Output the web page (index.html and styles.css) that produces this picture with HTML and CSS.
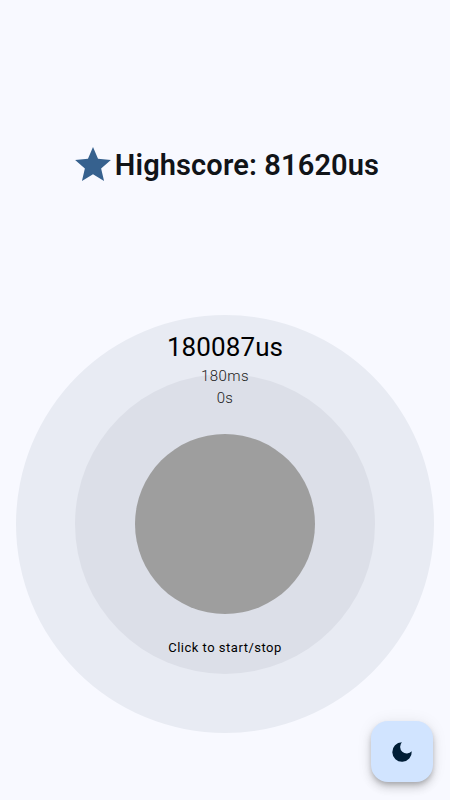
FILE: index.html
```html
<!DOCTYPE html>
<html lang="en">
<head>
  <meta charset="UTF-8" />
  <meta name="viewport" content="width=device-width, initial-scale=1" />
  <title>Reaction Timer</title>
  <link rel="stylesheet" href="styles.css">
</head>
<body>
  <main class="app">
    <header class="highscore">
      <svg class="star" viewBox="2 2 20 19" aria-hidden="true">
        <path d="M12 17.27L18.18 21l-1.64-7.03L22 9.24l-7.19-.61L12 2 9.19 8.63 2 9.24l5.46 4.73L5.82 21z" />
      </svg>
      <h1>Highscore: 81620us</h1>
    </header>

    <section class="ring-outer">
      <div class="ring-inner">
        <button class="target" aria-label="Start or stop"></button>
      </div>
      <div class="times">
        <div class="time-us">180087us</div>
        <div class="time-ms">180ms</div>
        <div class="time-s">0s</div>
      </div>
      <p class="hint">Click to start/stop</p>
    </section>

    <button class="theme-btn" aria-label="Dark mode">
      <svg viewBox="0 0 24 24" aria-hidden="true">
        <path d="M11.9 3A9 9 0 1 0 21 11.4A6 6 0 0 1 11.9 3z" />
      </svg>
    </button>
  </main>
</body>
</html>
```

FILE: styles.css
```css
* {
  box-sizing: border-box;
}

body {
  font-family: Roboto, Arial, sans-serif;
  background: #f8f9ff;
  color: #000;
  margin: 0;
}

button {
  border: none;
  padding: 0;
  cursor: pointer;
}

.app {
  position: relative;
  height: 800px;
  overflow: hidden;
  display: flex;
  flex-direction: column;
  align-items: center;
}

.highscore {
  display: flex;
  align-items: center;
  height: 40px;
  margin-top: 144px;
  margin-left: 4px;
}

.star {
  width: 36px;
  height: 34px;
  margin-right: 4px;
  fill: #36618e;
}

h1 {
  margin: 1px 0 0;
  color: #111418;
  font-size: 29px;
  font-weight: 600;
  line-height: 36px;
  letter-spacing: 0.13px;
  white-space: nowrap;
}

.ring-outer {
  position: relative;
  display: grid;
  place-items: center;
  width: 418px;
  height: 418px;
  margin-top: 131px;
  border-radius: 50%;
  background: #e8ebf3;
}

.ring-inner {
  display: grid;
  place-items: center;
  width: 300px;
  height: 300px;
  border-radius: 50%;
  background: #dcdfe8;
}

.target {
  width: 180px;
  height: 180px;
  border-radius: 50%;
  background: #9e9e9e;
}

/* readout overlaps both rings */
.times {
  position: absolute;
  top: 16px;
  left: 0;
  width: 100%;
  text-align: center;
}

.time-us {
  margin-bottom: 1px;
  font-size: 26px;
  line-height: 33px;
  letter-spacing: 0.1px;
}

.time-ms,
.time-s {
  font-size: 15px;
  font-weight: 300;
  line-height: 22px;
  letter-spacing: 0.4px;
  color: #222;
}

.hint {
  position: absolute;
  bottom: 76px;
  left: 0;
  width: 100%;
  margin: 0;
  font-size: 13px;
  line-height: 18px;
  letter-spacing: 0.5px;
  text-align: center;
}

.theme-btn {
  position: absolute;
  right: 17px;
  bottom: 18px;
  display: grid;
  place-items: center;
  width: 62px;
  height: 61px;
  border-radius: 17px;
  background: #d1e4ff;
  box-shadow: 0 3px 5px -1px rgba(0, 0, 0, 0.2), 0 6px 10px rgba(0, 0, 0, 0.14), 0 1px 16px rgba(0, 0, 0, 0.08);
}

.theme-btn svg {
  width: 26px;
  height: 26px;
  fill: #001d36;
}
```
